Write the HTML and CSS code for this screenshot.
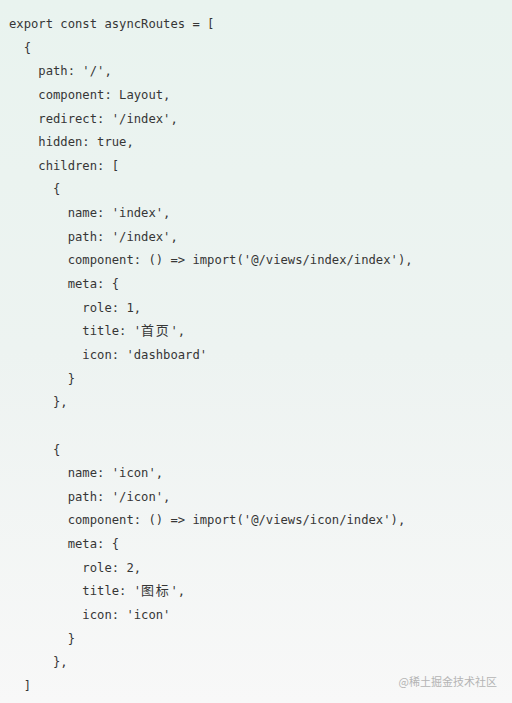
FILE: index.html
```html
<!DOCTYPE html>
<html lang="zh">
<head>
<meta charset="utf-8">
<link rel="stylesheet" href="styles.css">
</head>
<body>
<div class="block">
<pre class="code">export const asyncRoutes = [
  {
    path: '/',
    component: Layout,
    redirect: '/index',
    hidden: true,
    children: [
      {
        name: 'index',
        path: '/index',
        component: () =&gt; import('@/views/index/index'),
        meta: {
          role: 1,
          title: '<span class="cjk">首页</span>',
          icon: 'dashboard'
        }
      },

      {
        name: 'icon',
        path: '/icon',
        component: () =&gt; import('@/views/icon/index'),
        meta: {
          role: 2,
          title: '<span class="cjk">图标</span>',
          icon: 'icon'
        }
      },
  ]</pre>
<div class="mark">@稀土掘金技术社区</div>
</div>
</body>
</html>
```
FILE: styles.css
```css
html, body {
  margin: 0;
  padding: 0;
}
body {
  width: 512px;
  height: 703px;
  overflow: hidden;
}
.block {
  position: relative;
  height: 703px;
  box-sizing: border-box;
  padding: 13px 0 0 9px;
  background: linear-gradient(180deg, #e9f3ef 0%, #edf3f1 50%, #f8f8f8 100%);
}
.code {
  margin: 0;
  font-family: "DejaVu Sans Mono", "Liberation Mono", "Noto Sans CJK SC", monospace;
  font-size: 12.2px;
  line-height: 23.64px;
  color: #363636;
}
.cjk {
  font-family: "Noto Sans CJK SC", sans-serif;
  font-size: 13px;
  line-height: 1;
  letter-spacing: 1.7px;
}
.mark {
  position: absolute;
  right: 15px;
  bottom: 14px;
  font-family: "Noto Sans CJK SC", sans-serif;
  font-size: 11px;
  color: #b4b4b4;
}
```
